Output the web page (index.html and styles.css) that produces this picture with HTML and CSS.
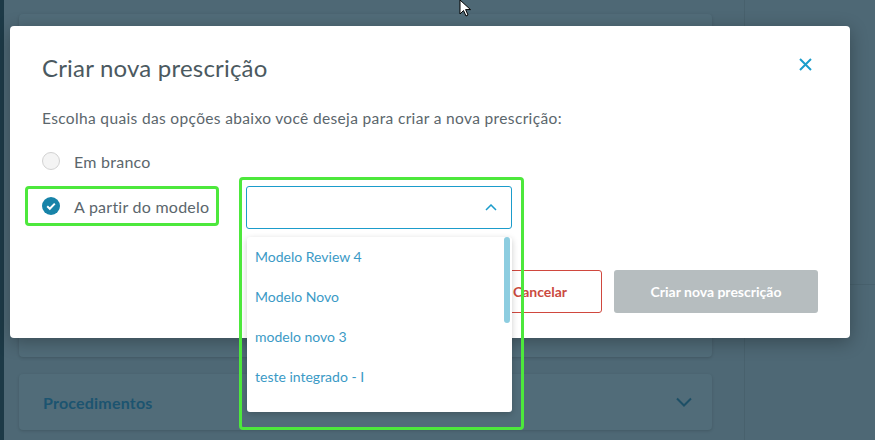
FILE: index.html
```html
<!DOCTYPE html>
<html lang="pt">
<head>
  <meta charset="UTF-8">
  <title>Criar nova prescrição</title>
  <link rel="stylesheet" href="styles.css">
</head>
<body>
  <div class="page">
    <div class="rail"></div>
    <main class="content">
      <section class="card card-main"></section>
      <section class="card card-proc">
        <span class="card-title">Procedimentos</span>
        <svg class="chevron-down" width="16" height="10" viewBox="0 0 16 10"><path d="M1 1.5 L8 8.5 L15 1.5" fill="none" stroke="#1d4f66" stroke-width="2"/></svg>
      </section>
    </main>
    <aside class="side">
      <div class="side-top"></div>
      <div class="side-bottom"></div>
    </aside>
  </div>

  <!-- modal -->
  <div class="modal">
    <div class="modal-head">
      <h2 class="modal-title">Criar nova prescrição</h2>
      <svg class="close" width="13" height="13" viewBox="0 0 13 13"><path d="M1 1 L12 12 M12 1 L1 12" stroke="#1a9dcb" stroke-width="2"/></svg>
    </div>
    <p class="modal-text">Escolha quais das opções abaixo você deseja para criar a nova prescrição:</p>

    <div class="option">
      <span class="radio"></span>
      <span class="option-label">Em branco</span>
    </div>

    <div class="option-row">
      <div class="option option-marked">
        <svg class="radio-on" width="18" height="18" viewBox="0 0 18 18"><circle cx="9" cy="9" r="9" fill="#1783a8"/><path d="M5.2 9.3 L7.8 11.8 L12.8 6.6" fill="none" stroke="#fff" stroke-width="2"/></svg>
        <span class="option-label">A partir do modelo</span>
      </div>
      <div class="model-select">
        <svg class="chevron-up" width="12" height="7" viewBox="0 0 12 7"><path d="M1 6 L6 1 L11 6" fill="none" stroke="#1b9ccb" stroke-width="1.5"/></svg>
        <ul class="dropdown">
          <li>Modelo Review 4</li>
          <li>Modelo Novo</li>
          <li>modelo novo 3</li>
          <li>teste integrado - I</li>
          <li>modelo novo do rafã</li>
        </ul>
        <span class="scrollbar"></span>
        <span class="highlight"></span>
      </div>
    </div>

    <div class="actions">
      <button class="btn btn-cancel">Cancelar</button>
      <button class="btn btn-create">Criar nova prescrição</button>
    </div>
  </div>

  <svg class="cursor" width="14" height="20" viewBox="0 0 14 20"><path d="M1 1 L1 15 L4.5 11.5 L7 17 L9 16 L6.6 10.6 L11.5 10.6 Z" fill="#fff" stroke="#000" stroke-width="1"/></svg>
</body>
</html>
```

FILE: styles.css
```css
* { box-sizing: border-box; }

body {
  margin: 0;
  width: 875px;
  height: 440px;
  overflow: hidden;
  position: relative;
  background-color: #4e6875;
  font-family: "Lato", "Open Sans", sans-serif;
}

/* pagina por tras do overlay */
.page { display: flex; height: 440px; }
.rail { width: 4px; background-color: #1d3a47; }
.content { width: 740px; padding: 14px 32px 0 15px; }
.card {
  background-color: #516c79;
  border-radius: 4px;
  box-shadow: 0 1px 3px rgba(0, 0, 0, 0.15);
}
.card-main { height: 343px; }
.card-proc {
  height: 56px;
  margin-top: 17px;
  padding: 0 20px 0 24px;
  display: flex;
  align-items: center;
  justify-content: space-between;
}
.card-title { font-size: 16px; letter-spacing: 0.2px; font-weight: bold; color: #1c5470; }

.side { flex: 1; border-left: 1px solid #48616d; }
.side-top { height: 285px; border-bottom: 1px solid #48616d; }

/* modal */
.modal {
  position: absolute;
  left: 10px;
  top: 26px;
  width: 840px;
  height: 312px;
  padding: 26px 32px 25px;
  background-color: #fff;
  border-radius: 4px;
  box-shadow: 0 4px 18px rgba(0, 0, 0, 0.3);
}
.modal-head { display: flex; justify-content: space-between; align-items: flex-start; }
.modal-title { margin: 0; font-size: 24px; letter-spacing: 0.2px; line-height: 32px; font-weight: normal; color: #4b5960; }
.close { margin: 6px 6px 0 0; }

.modal-text { margin: 23px 0 0; font-size: 15.5px; letter-spacing: 0.35px; line-height: 22px; color: #5b666c; }

.option { display: flex; align-items: center; gap: 14px; height: 24px; margin-top: 20px; }
.option-label { font-size: 16px; letter-spacing: 0.25px; color: #5b666c; }
.radio {
  width: 18px;
  height: 18px;
  border-radius: 50%;
  background-color: #f4f4f4;
  border: 1px solid #d2d2d2;
}

.option-row { display: flex; align-items: flex-start; margin-top: 13px; }
.option-marked {
  margin: 0 0 0 -17px;
  width: 194px;
  height: 40px;
  padding-left: 14px;
  border: 3px solid #4de83c;
  border-radius: 4px;
}

.model-select {
  position: relative;
  width: 266px;
  height: 43px;
  margin-left: 27px;
  border: 1px solid #1b9ccb;
  border-radius: 3px;
  display: flex;
  align-items: center;
  justify-content: flex-end;
  padding-right: 14px;
}
.dropdown {
  position: absolute;
  left: 0;
  top: 50px;
  width: 265px;
  height: 175px;
  margin: 0;
  padding: 0;
  list-style: none;
  overflow: hidden;
  background-color: #fff;
  border-radius: 3px;
  box-shadow: 0 2px 6px rgba(0, 0, 0, 0.2);
  z-index: 2;
}
.dropdown li { height: 40px; line-height: 40px; padding-left: 8px; font-size: 14px; color: #3b9ac6; }
.scrollbar {
  position: absolute;
  right: 1px;
  top: 50px;
  width: 6px;
  height: 86px;
  border-radius: 3px;
  background-color: #8dcde0;
  z-index: 3;
}
.highlight {
  position: absolute;
  left: -8px;
  top: -10px;
  width: 285px;
  height: 253px;
  border: 3px solid #4de83c;
  border-radius: 4px;
  z-index: 4;
}

.actions { display: flex; justify-content: flex-end; gap: 12px; margin-top: 41px; }
.btn {
  height: 43px;
  border-radius: 3px;
  font-family: inherit;
  font-size: 14px;
  font-weight: bold;
}
.btn-cancel { width: 124px; background-color: #fff; color: #cb4a40; border: 1px solid #d0483e; }
.btn-create { width: 204px; background-color: #b6bdbf; color: #fff; border: 0; }

.cursor { position: absolute; left: 459px; top: -1px; }
```
